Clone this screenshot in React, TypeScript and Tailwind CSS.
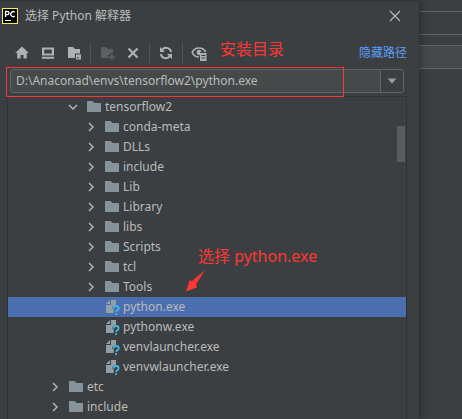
import { useState } from 'react'
import type { ReactNode } from 'react'

interface Entry {
  name: string
  depth: 0 | 1 | 2
  kind: 'folder' | 'file'
  open?: boolean
}

const entries: Entry[] = [
  { name: 'tensorflow2', depth: 1, kind: 'folder', open: true },
  { name: 'conda-meta', depth: 2, kind: 'folder' },
  { name: 'DLLs', depth: 2, kind: 'folder' },
  { name: 'include', depth: 2, kind: 'folder' },
  { name: 'Lib', depth: 2, kind: 'folder' },
  { name: 'Library', depth: 2, kind: 'folder' },
  { name: 'libs', depth: 2, kind: 'folder' },
  { name: 'Scripts', depth: 2, kind: 'folder' },
  { name: 'tcl', depth: 2, kind: 'folder' },
  { name: 'Tools', depth: 2, kind: 'folder' },
  { name: 'python.exe', depth: 2, kind: 'file' },
  { name: 'pythonw.exe', depth: 2, kind: 'file' },
  { name: 'venvlauncher.exe', depth: 2, kind: 'file' },
  { name: 'venvwlauncher.exe', depth: 2, kind: 'file' },
  { name: 'etc', depth: 0, kind: 'folder' },
  { name: 'include', depth: 0, kind: 'folder' },
]

const indent = {
  0: 'pl-[39px]',
  1: 'pl-[57px]',
  2: 'pl-[75px]',
}

function Icon({ children }: { children: ReactNode }) {
  return (
    <svg viewBox="0 0 16 16" className="w-4 h-4 flex-shrink-0" fill="currentColor" aria-hidden="true">
      {children}
    </svg>
  )
}

function ToolButton({ label, disabled, children }: { label: string; disabled?: boolean; children: ReactNode }) {
  return (
    <button
      aria-label={label}
      disabled={disabled}
      className="w-[26px] h-6 flex items-center justify-center text-[#afb1b3] disabled:text-[#5c5e60]"
    >
      <Icon>{children}</Icon>
    </button>
  )
}

function Separator() {
  return <div className="w-px h-5 mx-[3px] bg-[#515355]" />
}

function Logo() {
  return (
    <svg viewBox="0 0 16 16" className="w-4 h-4" fill="none" aria-hidden="true">
      <rect x="0.5" y="0.5" width="15" height="15" fill="#000" stroke="#f6f04c" />
      <path d="M3.500 9V3.500h1.800a1.600 1.600 0 0 1 0 3.200H3.500" stroke="#fff" strokeWidth="1.300" />
      <path d="M12.800 4.200a2.500 2.500 0 1 0 0 3.900" stroke="#fff" strokeWidth="1.300" />
      <path d="M3 12.500h6" stroke="#fff" />
    </svg>
  )
}

function FolderIcon() {
  return (
    <span className="text-[#87939a]">
      <Icon>
        <path d="M1 2h5.500l2 2H15v9H1z" />
      </Icon>
    </span>
  )
}

function FileIcon() {
  return (
    <span className="text-[#929fa7]">
      <Icon>
        <path d="M7 1h5v5C9.800 6 8.200 7.200 8 9.800h1.700V14H2V6h5z" />
        <path d="M6 1v4H2z" />
        <path
          d="M9.500 9.500c0-1.500 1-2.500 2.500-2.500s2.700.9 2.700 2.300c0 1.900-2.600 1.900-2.600 3.700M12.100 14v2"
          fill="none"
          stroke="#40b6e0"
          strokeWidth="1.800"
        />
      </Icon>
    </span>
  )
}

function Row({ entry, selected, onSelect }: { entry: Entry; selected: boolean; onSelect: () => void }) {
  return (
    <li
      role="treeitem"
      aria-selected={selected}
      onClick={onSelect}
      className={`h-5 flex items-center ${indent[entry.depth]} ${selected ? 'bg-[#4b6eaf]' : ''}`}
    >
      <span className="w-4 mr-[5px] text-[#afb1b3]">
        {entry.kind === 'folder' && (
          <Icon>
            <path
              d={entry.open ? 'M4 6l4 4 4-4' : 'M6 4l4 4-4 4'}
              fill="none"
              stroke="currentColor"
              strokeWidth="1.500"
            />
          </Icon>
        )}
      </span>
      {entry.kind === 'folder' ? <FolderIcon /> : <FileIcon />}
      <span className="ml-[3px] whitespace-nowrap">{entry.name}</span>
    </li>
  )
}

export default function App() {
  const [selected, setSelected] = useState(10)
  const [path, setPath] = useState('D:\\Anaconad\\envs\\tensorflow2\\python.exe')

  return (
    <div className="flex min-h-screen overflow-hidden bg-[#3c3f41] text-[#bbbbbb] text-[12px] leading-5 font-['Noto_Sans','Noto_Sans_CJK_SC',sans-serif]">
      <main className="flex-1 min-w-0 flex flex-col border-t-2 border-[#323537] shadow-[1px_0_8px_rgba(0,0,0,0.4)] z-10">
        {/* Title bar */}
        <header className="h-7 flex items-center pl-[2px] pr-4">
          <Logo />
          <h1 className="flex-1 ml-[7px]">选择 Python 解释器</h1>
          <button aria-label="关闭" className="w-4 h-4 text-[#b4b6b7]">
            <Icon>
              <path d="M3 3l10 10M13 3L3 13" fill="none" stroke="currentColor" strokeWidth="1.200" />
            </Icon>
          </button>
        </header>

        {/* Toolbar */}
        <div className="h-[37px] pt-2 flex items-center pl-[9px] pr-3">
          <ToolButton label="主目录">
            <path d="M8 1.500L14.800 8H12.800v5.500H9.500V10h-3v3.500H3.200V8H1.200z" />
          </ToolButton>
          <ToolButton label="桌面">
            <path d="M2 2.500h12v8H2zM4.200 4.500v4h7.600v-4zM2 11.800h12v1.900H2z" fillRule="evenodd" />
          </ToolButton>
          <ToolButton label="项目目录">
            <path d="M2 2h5l2 2h5v4.500H9V13H2z" />
            <path d="M10 9.500h5v5h-5zM11.300 12v1.200h1.500V12z" fillRule="evenodd" />
          </ToolButton>
          <Separator />
          <ToolButton label="新建文件夹" disabled>
            <path d="M2 2h5l2 2h5v4h-3v2H9v3H2z" />
            <path d="M12 9h1.700v2.200H16v1.700h-2.300V15H12v-2.100H9.800v-1.700H12z" />
          </ToolButton>
          <ToolButton label="删除">
            <path d="M3.500 3.500l9 9M12.500 3.500l-9 9" fill="none" stroke="currentColor" strokeWidth="2.200" />
          </ToolButton>
          <Separator />
          <ToolButton label="刷新">
            <path
              d="M13.200 7A5.200 5.200 0 0 0 4 4.800M2.800 9a5.200 5.200 0 0 0 9.200 2.200"
              fill="none"
              stroke="currentColor"
              strokeWidth="1.900"
            />
            <path d="M2 2v5h5zM14 14V9H9z" />
          </ToolButton>
          <Separator />
          <ToolButton label="显示隐藏文件">
            <path
              d="M8 12C4.700 12 2.200 9.800 1.200 7.500 2.300 5 4.700 3 8 3s5.600 1.900 6.600 4"
              fill="none"
              stroke="currentColor"
              strokeWidth="1.700"
            />
            <path d="M8 4.800A2.700 2.700 0 0 1 10.600 7H9v3.100A2.700 2.700 0 1 1 8 4.800z" />
            <path d="M9 8h6.500v8H9zM10.300 10v1h4v-1zM10.300 12.500v1h4v-1z" fillRule="evenodd" />
          </ToolButton>
          <span className="ml-2 mb-2 text-[16px] text-[#fd3735] whitespace-nowrap">安装目录</span>
          <a href="#" className="ml-auto text-[#589df6] whitespace-nowrap">
            隐藏路径
          </a>
        </div>

        {/* Path field */}
        <div className="relative z-10 h-[30px] pt-[2px] pl-[10px] pr-[15px]">
          <div className="h-6 flex rounded-[3px] border border-[#646464] bg-[#45494a] overflow-hidden">
            <input
              aria-label="路径"
              value={path}
              onChange={(e) => setPath(e.target.value)}
              className="flex-1 min-w-0 px-[5px] outline-none"
            />
            <button
              aria-label="历史路径"
              className="w-[23px] flex items-center justify-center border-l border-[#646464] bg-[#3c3f41] text-[#9a9da0]"
            >
              <Icon>
                <path d="M3.500 5.500h9L8 10.500z" />
              </Icon>
            </button>
          </div>
          <div className="absolute inset-y-0 left-[6px] right-[75px] border border-[#fd3735] pointer-events-none" />
        </div>

        {/* File tree */}
        <div className="relative flex-1 -mt-px ml-[7px] mr-3 border border-b-0 border-[#323232]">
          <ul role="tree" aria-label="文件">
            {entries.map((entry, i) => (
              <Row key={i} entry={entry} selected={i === selected} onSelect={() => setSelected(i)} />
            ))}
          </ul>
          <div className="absolute top-[29px] right-px w-2 h-9 bg-[#595b5d]" />

          {/* Callout pointing at the interpreter */}
          <div className="absolute left-[178px] top-[149px] text-[#fd3735]">
            <p className="ml-3 text-[16px] whitespace-nowrap">选择 python.exe</p>
            <svg viewBox="0 0 20 22" className="w-5 h-[22px] mt-1" fill="currentColor" aria-hidden="true">
              <path d="M19 0L10 14.500l1 3L0 21.500 3.500 10.500l2.500.5z" />
            </svg>
          </div>
        </div>
      </main>

      {/* Settings window behind the dialog */}
      <aside className="w-[43px] pt-[11px]">
        <div className="h-6 border-y border-[#646464]" />
        <div className="h-6 mt-[10px] border-y border-[#646464] bg-[#45494a]" />
      </aside>
    </div>
  )
}
